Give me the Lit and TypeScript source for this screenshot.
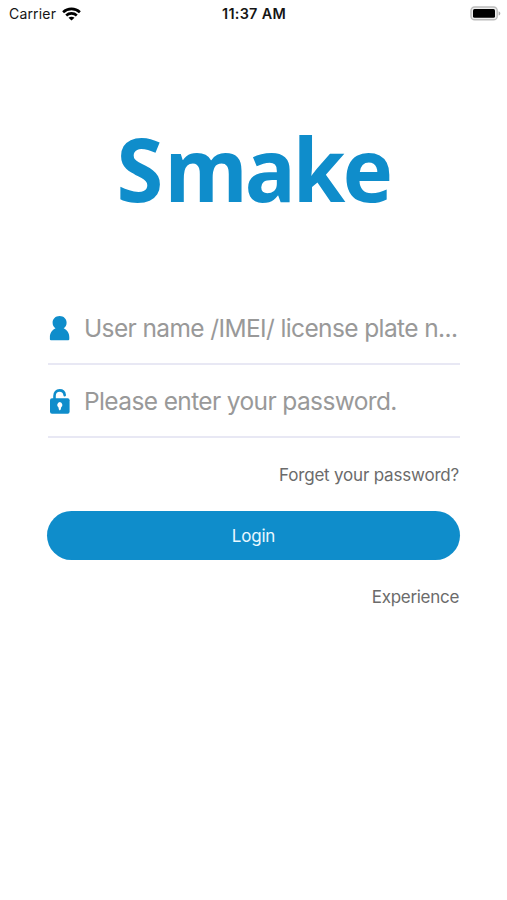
import { LitElement, html, css } from "lit";
import { customElement } from "lit/decorators.js";

@customElement("status-bar")
class StatusBar extends LitElement {
  static styles = css`
    :host { display: grid; grid-template-columns: 1fr auto 1fr; align-items: center; height: 27px; padding: 0 6px 0 9px; color: #151515; }
    .carrier { display: flex; align-items: center; gap: 6px; font-size: 14px; letter-spacing: 0.18px; }
    .time { font-size: 14.4px; font-weight: 600; letter-spacing: 0.3px; margin-left: -2px; }
    .battery { justify-self: end; display: block; }
    svg { display: block; }
  `;
  render() {
    return html`
      <div class="carrier">
        <span>Carrier</span>
        <svg width="19" height="14" viewBox="0 0 19 14" fill="none" stroke="#000" stroke-width="2.6">
          <path d="M1.1 5.2C5.7 .8 13.3 .8 17.9 5.2" />
          <path d="M4.2 8.5C7.1 5.7 11.9 5.7 14.8 8.5" />
          <path d="M9.5 13.6L6.5 10.8C8.1 9.3 10.9 9.3 12.5 10.8Z" fill="#000" stroke="none" />
        </svg>
      </div>
      <span class="time">11:37 AM</span>
      <svg class="battery" width="31" height="15" viewBox="0 0 31 15">
        <rect x="1" y="1" width="26.2" height="12.8" rx="3.6" fill="#eee" stroke="#bcbcbc" stroke-width="1.4" />
        <rect x="3" y="3" width="22" height="8.8" rx="1.5" fill="#000" />
        <path d="M28.6 5.2C30.9 6 30.9 8.8 28.6 9.6Z" fill="#aaa" />
      </svg>
    `;
  }
}

@customElement("login-field")
class LoginField extends LitElement {
  static properties = { label: { type: String } };
  declare label: string;
  static styles = css`
    :host { display: flex; align-items: center; gap: 13px; box-sizing: border-box; height: 73px; border-bottom: 2px solid #e8e8f4; padding-left: 1px; }
    .label { flex: 1; min-width: 0; white-space: nowrap; font-size: 24.5px; line-height: 36px; letter-spacing: -0.62px; color: #999; }
    ::slotted(svg) { display: block; flex: none; }
  `;
  render() {
    return html`<slot></slot><span class="label">${this.label}</span>`;
  }
}

@customElement("app-root")
class AppRoot extends LitElement {
  static styles = css`
    :host { display: block; width: 507px; height: 900px; background: #fff; font-family: Inter, "Liberation Sans", sans-serif; overflow: hidden; }
    .logo { margin: 81px 0 0; text-align: center; font: 700 88px/120px "Noto Sans", sans-serif; letter-spacing: -2.9px; transform: scaleX(0.965); color: #0f8dcb; }
    .initial { letter-spacing: 1.4px; }
    .form { display: flex; flex-direction: column; margin: 64px 47px 0 48px; }
    .link { align-self: flex-end; font-size: 17px; line-height: 24px; letter-spacing: -0.2px; color: #6b6b6b; margin-right: 1px; }
    .forget { margin-top: 25px; }
    .login { margin: 24px 0 0 -1px; height: 49px; border: 0; border-radius: 25px; background: #0f8dcb; color: #e9f8ff; font: 400 17px/49px Inter, sans-serif; letter-spacing: -0.2px; padding: 1px 0 0; }
    .experience { margin-top: 25px; letter-spacing: -0.3px; }
  `;
  render() {
    return html`
      <status-bar></status-bar>
      <h1 class="logo"><span class="initial">S</span>make</h1>
      <div class="form">
        <login-field label="User name /IMEI/ license plate n...">
          <svg width="22" height="26" viewBox="0 0 22 26" fill="#0f8dcb">
            <path d="M10.6 1C6.5 1 3.6 3.9 3.6 7.7C3.6 10 4.7 12 6.5 13.3C3.2 14.9 .9 18.3 .9 22.2V24.2Q.9 25.3 2 25.3H19.2Q20.3 25.3 20.3 24.2V22.2C20.3 18.3 18 14.9 14.7 13.3C16.5 12 17.6 10 17.6 7.7C17.6 3.9 14.7 1 10.6 1Z" />
          </svg>
        </login-field>
        <login-field label="Please enter your password.">
          <svg width="22" height="26" viewBox="0 0 22 26">
            <path d="M5.5 11V7.9C5.5 4.5 7.5 2.4 10.6 2.4C13.5 2.4 15.4 4.2 15.7 7.2" fill="none" stroke="#0f8dcb" stroke-width="2.6" stroke-linecap="round" />
            <rect x="1" y="10.3" width="19.6" height="15.4" rx="2" fill="#0f8dcb" />
            <path d="M10.8 14A2.9 2.9 0 0 0 9.4 19.2L9.9 21.6Q10.8 23.2 11.7 21.6L12.2 19.2A2.9 2.9 0 0 0 10.8 14Z" fill="#fff" />
          </svg>
        </login-field>
        <span class="link forget">Forget your password?</span>
        <button class="login">Login</button>
        <span class="link experience">Experience</span>
      </div>
    `;
  }
}
